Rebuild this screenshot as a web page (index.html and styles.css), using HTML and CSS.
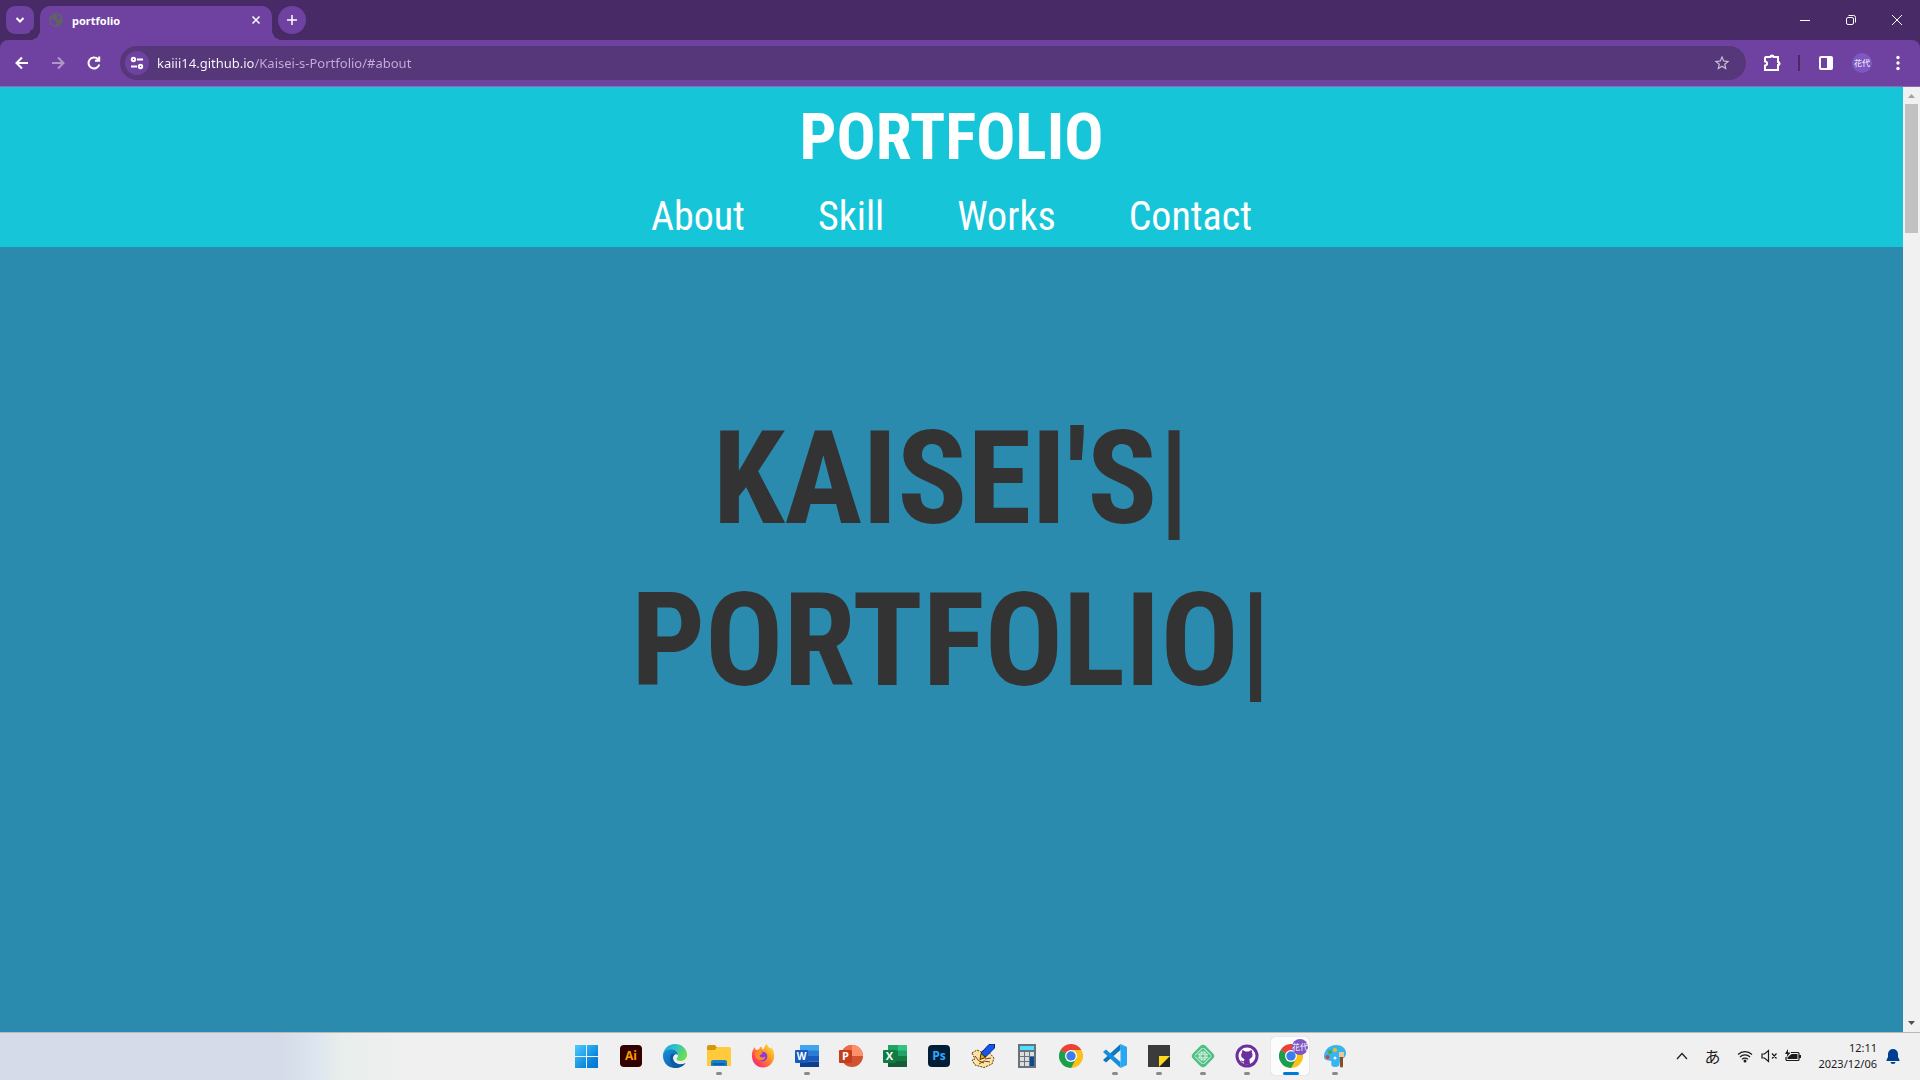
FILE: index.html
```html
<!DOCTYPE html>
<html lang="en">
<head>
<meta charset="utf-8">
<title>portfolio</title>
<link rel="stylesheet" href="styles.css">
</head>
<body>
<div class="tabstrip">
  <button class="tab-search" aria-label="Search tabs"><svg width="12" height="12" viewBox="0 0 12 12"><path d="M2.500 4l3.500 3.500L9.500 4" class="line"/></svg></button>
  <div class="tab">
    <svg width="14" height="14" viewBox="0 0 14 14"><circle cx="7" cy="7" r="7" fill="#5f6368"/><path d="M1.500 6c2-.6 4 .2 4.500 1.500.4 1 1.600 1 1.500 2.200 0 1-.8 1.200-1 2.800C3 12 1.300 9 1.500 6zM6 2.300c1.500 0 1.500.8 2.700 1 .3 1.200-.6 1.700-1 2.200.8 1 2.400.6 3.800 1.300.3-2.600-1.300-5-4-5.400z" fill="#6f42a1"/></svg>
    <span class="tab-title">portfolio</span>
    <button class="tab-close" aria-label="Close tab"><svg width="10" height="10" viewBox="0 0 10 10"><path d="M1.500 1.500l7 7M8.500 1.500l-7 7" class="line thin"/></svg></button>
  </div>
  <button class="new-tab" aria-label="New tab"><svg width="12" height="12" viewBox="0 0 12 12"><path d="M6 1v10M1 6h10" class="line thin"/></svg></button>
  <div class="window-controls">
    <button aria-label="Minimize"><svg width="12" height="12" viewBox="0 0 12 12"><path d="M1 6.500h10" class="hair"/></svg></button>
    <button aria-label="Restore"><svg width="12" height="12" viewBox="0 0 12 12"><rect x="1.500" y="3.500" width="7" height="7" rx="1.500" class="hair"/><path d="M3.500 1.500H8.500a2 2 0 0 1 2 2V8.500" class="hair"/></svg></button>
    <button aria-label="Close"><svg width="12" height="12" viewBox="0 0 12 12"><path d="M1 1l10 10M11 1L1 11" class="hair"/></svg></button>
  </div>
</div>
<div class="toolbar">
  <button class="tool" aria-label="Back"><svg width="16" height="16" viewBox="0 0 16 16"><path d="M14 8H3M8 2.500L2.500 8 8 13.500" class="bold"/></svg></button>
  <button class="tool dim" aria-label="Forward"><svg width="16" height="16" viewBox="0 0 16 16"><path d="M2 8h11M8 2.500L13.500 8 8 13.500" class="bold"/></svg></button>
  <button class="tool" aria-label="Reload"><svg width="16" height="16" viewBox="0 0 16 16"><path d="M13.300 9.500A5.500 5.500 0 1 1 12 4.200L13 5.200M13.200 1.500v4.300H9" class="bold"/></svg></button>
  <div class="omnibox">
    <button class="site-info" aria-label="View site information"><svg width="16" height="16" viewBox="0 0 16 16"><g class="bold"><circle cx="4.500" cy="4.500" r="1.700"/><path d="M8 4.500h6M2 11.500h6"/><circle cx="11.500" cy="11.500" r="1.700"/></g></svg></button>
    <input class="address" type="text" aria-label="Address" value="kaiii14.github.io/Kaisei-s-Portfolio/#about">
    <button class="star" aria-label="Bookmark this tab"><svg width="18" height="18" viewBox="0 0 24 24"><path fill="#cbbfd8" d="M22 9.240l-7.190-.62L12 2 9.190 8.630 2 9.240l5.460 4.730L5.820 21 12 17.270 18.180 21l-1.630-7.030L22 9.240zM12 15.400l-3.760 2.270 1-4.280-3.320-2.880 4.380-.38L12 6.100l1.710 4.040 4.380.38-3.320 2.880 1 4.280L12 15.400z"/></svg></button>
  </div>
  <button class="tool ext" aria-label="Extensions"><svg width="18" height="18" viewBox="0 0 18 18"><path d="M3 3h4.500a1.500 1.500 0 0 1 3 0H15v5a1.500 1.500 0 0 1 0 3v5H2v-4.500c2.800-.4 2.800-3.600 0-4V4a1 1 0 0 1 1-1z" class="bold"/><path d="M7 3a2 2 0 0 1 4 0zM15 7.500a2 2 0 0 1 0 4z" fill="#fff"/></svg></button>
  <span class="divider"></span>
  <button class="tool panel" aria-label="Side panel"><svg width="16" height="16" viewBox="0 0 16 16"><rect x="2" y="2" width="12" height="12" rx="1" class="bold"/><path d="M9 2h5v12H9z" fill="#fff"/></svg></button>
  <button class="tool" aria-label="Profile"><span class="avatar">花代</span></button>
  <button class="tool" aria-label="Menu"><svg width="16" height="16" viewBox="0 0 16 16"><g fill="#fff"><circle cx="8" cy="2.500" r="1.700"/><circle cx="8" cy="8" r="1.700"/><circle cx="8" cy="13.500" r="1.700"/></g></svg></button>
</div>
<div class="viewport">
  <div class="page">
    <header class="site-header">
      <h1 class="site-title">PORTFOLIO</h1>
      <nav class="site-nav">
        <a href="#about">About</a>
        <a href="#skill">Skill</a>
        <a href="#works">Works</a>
        <a href="#contact">Contact</a>
      </nav>
    </header>
    <main class="hero">
      <p>KAISEI'S|</p>
      <p>PORTFOLIO|</p>
    </main>
  </div>
  <div class="scrollbar">
    <svg width="17" height="17" viewBox="0 0 17 17"><path d="M5 11l3.500-4 3.500 4z" fill="#a3a3a3"/></svg>
    <span class="thumb"></span>
    <svg class="down" width="17" height="17" viewBox="0 0 17 17"><path d="M5 6l3.500 4L12 6z" fill="#505050"/></svg>
  </div>
</div>
<div class="taskbar">
  <div class="apps">
    <button aria-label="Start"><svg width="24" height="24" viewBox="0 0 24 24"><defs><linearGradient id="win" x1="0" y1="0" x2="24" y2="24" gradientUnits="userSpaceOnUse"><stop stop-color="#4fd0ff"/><stop offset=".7" stop-color="#0a84dc"/><stop offset="1" stop-color="#0072d0"/></linearGradient></defs><path fill="url(#win)" d="M0 1h11v11H0zM12 1h11v11H12zM0 13h11v11H0zM12 13h11v11H12z"/></svg></button>
    <button aria-label="Illustrator"><svg width="24" height="24" viewBox="0 0 24 24"><rect x="1" y="1" width="22" height="22" rx="4" fill="#330000"/><text x="12" y="16" class="glyph" font-size="12" fill="#ff9a00">Ai</text></svg></button>
    <button aria-label="Edge"><svg width="24" height="24" viewBox="0 0 24 24"><defs><linearGradient id="edge1" x1="0" y1="0" x2="1" y2=".5"><stop stop-color="#1a9de0"/><stop offset=".5" stop-color="#2fc2c8"/><stop offset="1" stop-color="#6ae04e"/></linearGradient><linearGradient id="edge2" x1="0" y1="0" x2="1" y2="1"><stop stop-color="#1690db"/><stop offset="1" stop-color="#0b4fa0"/></linearGradient></defs><path fill="url(#edge1)" d="M0 12C0 5 5 0 12 0s12 5 12 10.500c0 4-3 6.500-6.500 6.500-2.500 0-4-1-4-2 0-.8 1.500-1.500 1.500-3.500 0-2.500-2.500-5-6-5-4.500 0-8 2.500-9 5.500z"/><path fill="url(#edge2)" d="M0 12c0-4 4-6.500 8.500-6.500 4 0 6.500 3 6.500 6-1-2-5-1.500-5 2.500 0 4 4 6.500 8 6.500 2 0 3.500-.6 4.500-1.200C20.500 22.300 16.500 24 12 24 5 24 0 18.500 0 12z"/><path fill="#0c59a4" d="M8.500 10C6 13 6.500 20 12.500 23.900 16.700 23.800 20.400 22 22.500 19c-6 3-12.500.5-12.500-5 0-2 1-3.200 2-3.500-1-.9-2.500-.9-3.500-.5z"/></svg></button>
    <button class="running" aria-label="Explorer"><svg width="24" height="24" viewBox="0 0 24 24"><path d="M0 3a2 2 0 0 1 2-2h6l2 2.500-2 3.500H0z" fill="#d8960c"/><path d="M0 6h8l2-3h12a2 2 0 0 1 2 2v17H0z" fill="#ffcb3d"/><path d="M4 22v-4a2 2 0 0 1 2-2h12a2 2 0 0 1 2 2v4z" fill="#1880ca"/><path d="M6 19h12v2H6z" fill="#0b5fa8"/></svg></button>
    <button aria-label="Firefox"><svg width="24" height="24" viewBox="0 0 24 24"><defs><linearGradient id="fox" x1="1" y1="0" x2="0" y2="1"><stop stop-color="#fff044"/><stop offset=".4" stop-color="#ff9820"/><stop offset=".75" stop-color="#ff405c"/><stop offset="1" stop-color="#e0219a"/></linearGradient></defs><path fill="url(#fox)" d="M1 13C.5 8 2 5 4 3c0 1.500.4 2.200 1 3 1-.5 2-.7 3.200-.5 0-1.300 1-2.500 2.300-3 0 1.300.7 2.200 2 3 1-2 1-4.500 3.500-5.500.2 2 1.700 3 3 4.600l1.200-1.100C22.500 6 23.500 9 23.200 12.500 22.700 19 18 23.500 12 23.500S1.500 19 1 13z"/><circle cx="11.500" cy="12.500" r="4.800" fill="#8a3bdc"/><path d="M5 8c3-1 5 0 7 .7-1 2-3 1.600-3.500 3 1.500 2.600 4 2 6 .7-.5 4-7 5.600-9.500 1.200C4 11.700 4 9.800 5 8z" fill="#ff8b26"/></svg></button>
    <button class="running" aria-label="Word"><svg width="24" height="24" viewBox="0 0 24 24"><path fill="#41a5ee" d="M5 1h19v6H5z"/><path fill="#2b7cd3" d="M5 6.500h19V12H5z"/><path fill="#185abd" d="M5 12h19v5.500H5z"/><path fill="#103f91" d="M5 17.500h19V23H5z"/><rect y="6" width="13" height="13" rx="1" fill="#185abd"/><text x="6.500" y="16" class="glyph" font-size="10" fill="#fff">W</text></svg></button>
    <button aria-label="PowerPoint"><svg width="24" height="24" viewBox="0 0 24 24"><circle cx="13" cy="12" r="11" fill="#d35230"/><path d="M13 1a11 11 0 0 1 11 11H13z" fill="#ff8f6b"/><path d="M13 1v11H2A11 11 0 0 1 13 1z" fill="#ed6c47"/><rect y="6" width="13" height="13" rx="1" fill="#c43e1c"/><text x="6.500" y="16" class="glyph" font-size="11" fill="#fff">P</text></svg></button>
    <button aria-label="Excel"><svg width="24" height="24" viewBox="0 0 24 24"><path fill="#21a366" d="M5 1h10v6H5z"/><path fill="#33c481" d="M15 1h9v6h-9z"/><path fill="#107c41" d="M5 6.500h10V17H5z"/><path fill="#21a366" d="M15 6.500h9V12h-9z"/><path fill="#107c41" d="M15 12h9v5.500h-9z"/><path fill="#185c37" d="M5 17h19v6H5z"/><rect y="6" width="13" height="13" rx="1" fill="#107c41"/><text x="6.500" y="16" class="glyph" font-size="11" fill="#fff">X</text></svg></button>
    <button aria-label="Photoshop"><svg width="24" height="24" viewBox="0 0 24 24"><rect x="1" y="1" width="22" height="22" rx="4" fill="#001e36"/><text x="12" y="16" class="glyph" font-size="12" fill="#31a8ff">Ps</text></svg></button>
    <button aria-label="Notes editor"><svg width="24" height="24" viewBox="0 0 24 24"><path d="M1 9l5-3 4 2 5-3 8 9-2 6-8 3.500L4 21l-3-5 3-1z" fill="#ffe3a3" stroke="#5a3a10" stroke-dasharray="2 1"/><path d="M4 12l4 5 5 2M8 20l5-3 6 1M14 15l6-1" stroke="#684519" fill="none"/><path d="M10 9l8-8.500 5.500-.5v4l-9 9z" fill="#1557ee" stroke="#082070"/><path d="M10 9.500l4.500 4-5.500 2z" fill="#ff9f1c" stroke="#503000"/></svg></button>
    <button aria-label="Calculator"><svg width="24" height="24" viewBox="0 0 24 24"><path d="M3 0h18v24H3z" fill="#67727c"/><path d="M5 2h14v4H5z" fill="#4fe0ff"/><path d="M5 8h4v4H5zM10 8h4v4h-4zM15 8h4v4h-4zM5 13h4v4H5zM10 13h4v4h-4zM5 18h4v4H5zM10 18h4v4h-4z" fill="#d9dde0"/><path d="M15 13h4v9h-4z" fill="#094a92"/></svg></button>
    <button aria-label="Chrome"><svg width="24" height="24" viewBox="0 0 24 24"><g id="chrome"><path d="M12 12L1.600 6A12 12 0 0 1 22.400 6z" fill="#ea4335"/><path d="M12 12L22.400 6A12 12 0 0 1 12 24z" fill="#fbc116"/><path d="M12 12v12A12 12 0 0 1 1.600 6z" fill="#1e9e4b"/><path d="M12 6h10.400L17 15z" fill="#fbc116"/><path d="M1.600 6h20.800H12L7 9z" fill="#ea4335"/><path d="M1.600 6L7 15l10 0-5 9z" fill="#1e9e4b"/><circle cx="12" cy="12" r="6" fill="#fff"/><circle cx="12" cy="12" r="4.700" fill="#3b7ded"/></g></svg></button>
    <button class="running" aria-label="Visual Studio Code"><svg width="24" height="24" viewBox="0 0 24 24"><path d="M17.500 0L24 3v18l-6.500 3z" fill="#28a8f0"/><path d="M17.500 0v6L3 18.500 0 16z" fill="#0d77c0"/><path d="M0 8l3-2.500L17.500 18v6z" fill="#168fd8"/></svg></button>
    <button class="running" aria-label="Sticky Notes"><svg width="24" height="24" viewBox="0 0 24 24"><path d="M1 1h22v11L12 23H1z" fill="#3b3b3b"/><path d="M12 12h11v11H12z" fill="#262626"/><path d="M12 12h11L12 23z" fill="#ffd91a"/></svg></button>
    <button class="running" aria-label="Source tool"><svg width="24" height="24" viewBox="0 0 24 24"><rect x="3" y="3" width="18" height="18" rx="4" transform="rotate(45 12 12)" fill="#4fbf83"/><path d="M11.500 4L4 11.500M4 12.500l7.500 7.500M12.500 4l7.500 7.500M20 12.500L12.500 20M11 7.500l-3.500 3.500H11zM13 7.500l3.500 3.500H13zM11 16.500L7.500 13H11zM13 16.500l3.500-3.500H13z" stroke="#fff" fill="none"/></svg></button>
    <button class="running" aria-label="GitHub Desktop"><svg width="24" height="24" viewBox="0 0 24 24"><circle cx="12" cy="12" r="11.500" fill="#6e2f9e"/><circle cx="12" cy="12" r="8.500" fill="#fff"/><path d="M7.500 6l3 1.500h3L16.500 6c.5 1 .6 2 .4 2.800 1.200 1.900.9 5.200-2.500 6.200l.6 5.100c-2 .8-4 .8-6 0v-1.600c-2 .4-2.500-.6-3.400-1.900 1.300-.1 2 1 3.400.7l.4-2.300c-3.600-1-4-4.200-2.300-6.200C6.900 8 7 7 7.500 6z" fill="#6e2f9e"/></svg></button>
    <button class="running active" aria-label="Chrome profile"><svg width="24" height="24" viewBox="0 0 24 24"><use href="#chrome"/></svg><span class="badge">花代</span></button>
    <button class="running" aria-label="Paint"><svg width="24" height="24" viewBox="0 0 24 24"><path d="M1 13C1 6 6 1 13 1c6 0 10 3.500 10 8 0 6-5 5-6 8-1 2.500 1 6-5 6-4 0-4-3-3.500-5C9 15.500 1 18 1 13z" fill="#38b5ee"/><circle cx="4.500" cy="13" r="2" fill="#d8432b"/><circle cx="7" cy="8" r="2" fill="#4aa83b"/><circle cx="12" cy="6" r="2" fill="#f5bd1f"/><circle cx="12" cy="14" r="1.500" fill="#e8f5fc"/><path d="M16 8h5v5h-5z" fill="#e8c79a"/><path d="M17 13h3v9a1.500 1.500 0 0 1-3 0z" fill="#8a4d20"/></svg></button>
  </div>
  <div class="tray">
    <button aria-label="Show hidden icons"><svg width="12" height="12" viewBox="0 0 12 12"><path d="M1 9l5-5.500L11 9" class="dark"/></svg></button>
    <button class="ime" aria-label="Input mode">あ</button>
    <button class="status" aria-label="Network, sound and battery">
      <svg width="16" height="16" viewBox="0 0 16 16"><path d="M1 6.500a10 10 0 0 1 14 0M3 9a7 7 0 0 1 10 0M5 11.300a4.200 4.200 0 0 1 6 0" class="dark"/><circle cx="8" cy="13" r="1.500" fill="#1b1b1b"/></svg>
      <svg width="16" height="16" viewBox="0 0 16 16"><path d="M1 6h2.500L7.500 2.500v11L3.500 10H1zM11 5.500l4.500 5M15.500 5.500l-4.500 5" class="dark"/></svg>
      <svg width="16" height="16" viewBox="0 0 16 16"><path d="M6 4.500h7a1 1 0 0 1 1 1v6a1 1 0 0 1-1 1H2a1 1 0 0 1-1-1V9" class="dark"/><path d="M6.500 6H12.500v5H2.500V9.500zM14 7h2v3h-2zM3 1L0 6h2.500L1.500 9.500 5.500 4.500H3z" fill="#1b1b1b"/></svg>
    </button>
    <button class="clock"><span>12:11</span><span>2023/12/06</span></button>
    <button aria-label="Notifications"><svg width="16" height="16" viewBox="0 0 16 16"><path d="M8 1a5 5 0 0 1 5 5v3l1.500 3v1h-13v-1L3 9V6a5 5 0 0 1 5-5zM5.500 14h5a2.500 2 0 0 1-5 0z" fill="#003e92"/></svg></button>
  </div>
</div>
</body>
</html>
```
FILE: styles.css
```css
* { box-sizing: border-box; margin: 0; }
body {
  min-height: 100vh;
  display: flex;
  flex-direction: column;
  font-family: "Noto Sans", "Noto Sans CJK JP", sans-serif;
}
button {
  display: flex;
  align-items: center;
  justify-content: center;
  padding: 0;
  border: 0;
  background: none;
  color: inherit;
  font: inherit;
}
svg { display: block; flex: none; }
.line, .bold, .hair, .dark { fill: none; stroke: #fff; }
.line { stroke-width: 2; }
.line.thin { stroke-width: 1.5; }
.bold { stroke-width: 2; }
.hair { stroke-width: 1; }
.dark { stroke: #1b1b1b; stroke-width: 1.2; }

.tabstrip {
  position: relative;
  z-index: 1;
  display: flex;
  height: 40px;
  padding: 6px 0 0 6px;
  background: #472a66;
  color: #fff;
}
.tab-search, .new-tab { width: 28px; height: 28px; background: #6f42a1; }
.tab-search { border-radius: 9px; }
.new-tab { border-radius: 50%; margin-left: 6px; }
.tab {
  position: relative;
  display: flex;
  align-items: center;
  gap: 9px;
  width: 232px;
  margin-left: 6px;
  padding: 0 10px 6px 9px;
  border-radius: 10px 10px 0 0;
  background: #6f42a1;
}
.tab::before, .tab::after {
  content: "";
  position: absolute;
  bottom: 0;
  width: 10px;
  height: 10px;
}
.tab::before { right: 100%; background: radial-gradient(circle at 0 0, #472a66 10px, #6f42a1 10px); }
.tab::after { left: 100%; background: radial-gradient(circle at 100% 0, #472a66 10px, #6f42a1 10px); }
.tab-title { flex: 1; padding-top: 2px; font-size: 11px; font-weight: 700; line-height: 16px; }
.tab-close { width: 12px; height: 16px; }
.window-controls { display: flex; margin-left: auto; }
.window-controls button { width: 46px; height: 28px; }

.toolbar {
  z-index: 0;
  display: flex;
  align-items: center;
  height: 47px;
  padding: 0 4px;
  border-bottom: 1px solid #9068b8;
  border-radius: 8px 8px 0 0;
  background: #6f42a1;
  box-shadow: 0 -8px #472a66;
  color: #fff;
}
.tool { width: 36px; height: 34px; }
.dim { opacity: .45; }
.omnibox {
  flex: 1;
  display: flex;
  align-items: center;
  height: 34px;
  margin: 0 8px;
  padding: 0 15px 0 5px;
  border-radius: 17px;
  background: #55377a;
}
.site-info { width: 24px; height: 24px; border-radius: 50%; background: #6f42a1; }
.address {
  flex: 1;
  padding: 0 8px;
  border: 0;
  background: linear-gradient(to right, #fff 105px, #c3b0d8 105px);
  background-clip: text;
  color: transparent;
  font: 13px/20px "Noto Sans", sans-serif;
}
.ext { margin-right: 8px; }
.divider { width: 2px; height: 16px; background: #472a66; }
.panel { margin-left: 8px; }
.avatar, .badge {
  display: grid;
  place-items: center;
  border-radius: 50%;
  background: #7e57c2;
  color: #fff;
  font: 8px/10px "Noto Sans CJK JP", sans-serif;
}
.avatar { width: 20px; height: 20px; }

.viewport { flex: 1; display: flex; }
.page {
  flex: 1;
  display: flex;
  flex-direction: column;
  font-family: "Roboto Condensed", "Liberation Sans Narrow", Roboto, sans-serif;
  text-align: center;
}
.site-header { height: 160px; padding-top: 13px; background: #17c5d8; color: #fff; }
.site-title { font-size: 65px; line-height: 75px; font-weight: 700; }
.site-nav { display: flex; justify-content: center; gap: 73px; padding-top: 18px; }
.site-nav a { color: inherit; font-size: 40px; line-height: 47px; text-decoration: none; }
.hero {
  flex: 1;
  padding-top: 151px;
  background: #2a8bae;
  color: #333;
  font-size: 130px;
  font-weight: 700;
  line-height: 162px;
}
.scrollbar { display: flex; flex-direction: column; align-items: center; width: 17px; background: #f1f1f1; }
.thumb { width: 13px; height: 129px; background: #c1c1c1; }
.down { margin-top: auto; }

.taskbar {
  display: grid;
  grid-template-columns: 1fr auto 1fr;
  height: 48px;
  border-top: 1px solid #b9b9b9;
  background: linear-gradient(to right, #d5dbe8 280px, #dce5f1 315px, #e8eeeb 340px, #f0f0f0 410px);
  color: #1b1b1b;
}
.apps { grid-column: 2; display: flex; }
.apps button { position: relative; width: 44px; height: 47px; padding: 0 0 2px 2px; }
.apps svg { position: relative; }
.glyph { font-family: "Open Sans", sans-serif; font-weight: 700; text-anchor: middle; }
.running::after {
  content: "";
  position: absolute;
  bottom: 5px;
  width: 6px;
  height: 3px;
  border-radius: 2px;
  background: #8a8a8a;
}
.running.active::before {
  content: "";
  position: absolute;
  inset: 4px 3px 5px 3px;
  border-radius: 4px;
  background: #fcfcfc;
  box-shadow: 0 0 1px #aaa;
}
.running.active::after { width: 16px; background: #0078d4; }
.badge { position: absolute; top: 6px; right: 4px; width: 16px; height: 16px; }
.tray { display: flex; align-items: center; justify-content: flex-end; padding: 0 19px 2px 0; }
.tray > button { height: 40px; }
.ime { width: 16px; margin: 0 17px 0 16px; font: 16px/20px "Noto Sans CJK JP", sans-serif; }
.status { gap: 8px; }
.tray .clock {
  flex-direction: column;
  align-items: flex-end;
  margin: 0 8px 0 17px;
  font-size: 11px;
  line-height: 16px;
}
```
